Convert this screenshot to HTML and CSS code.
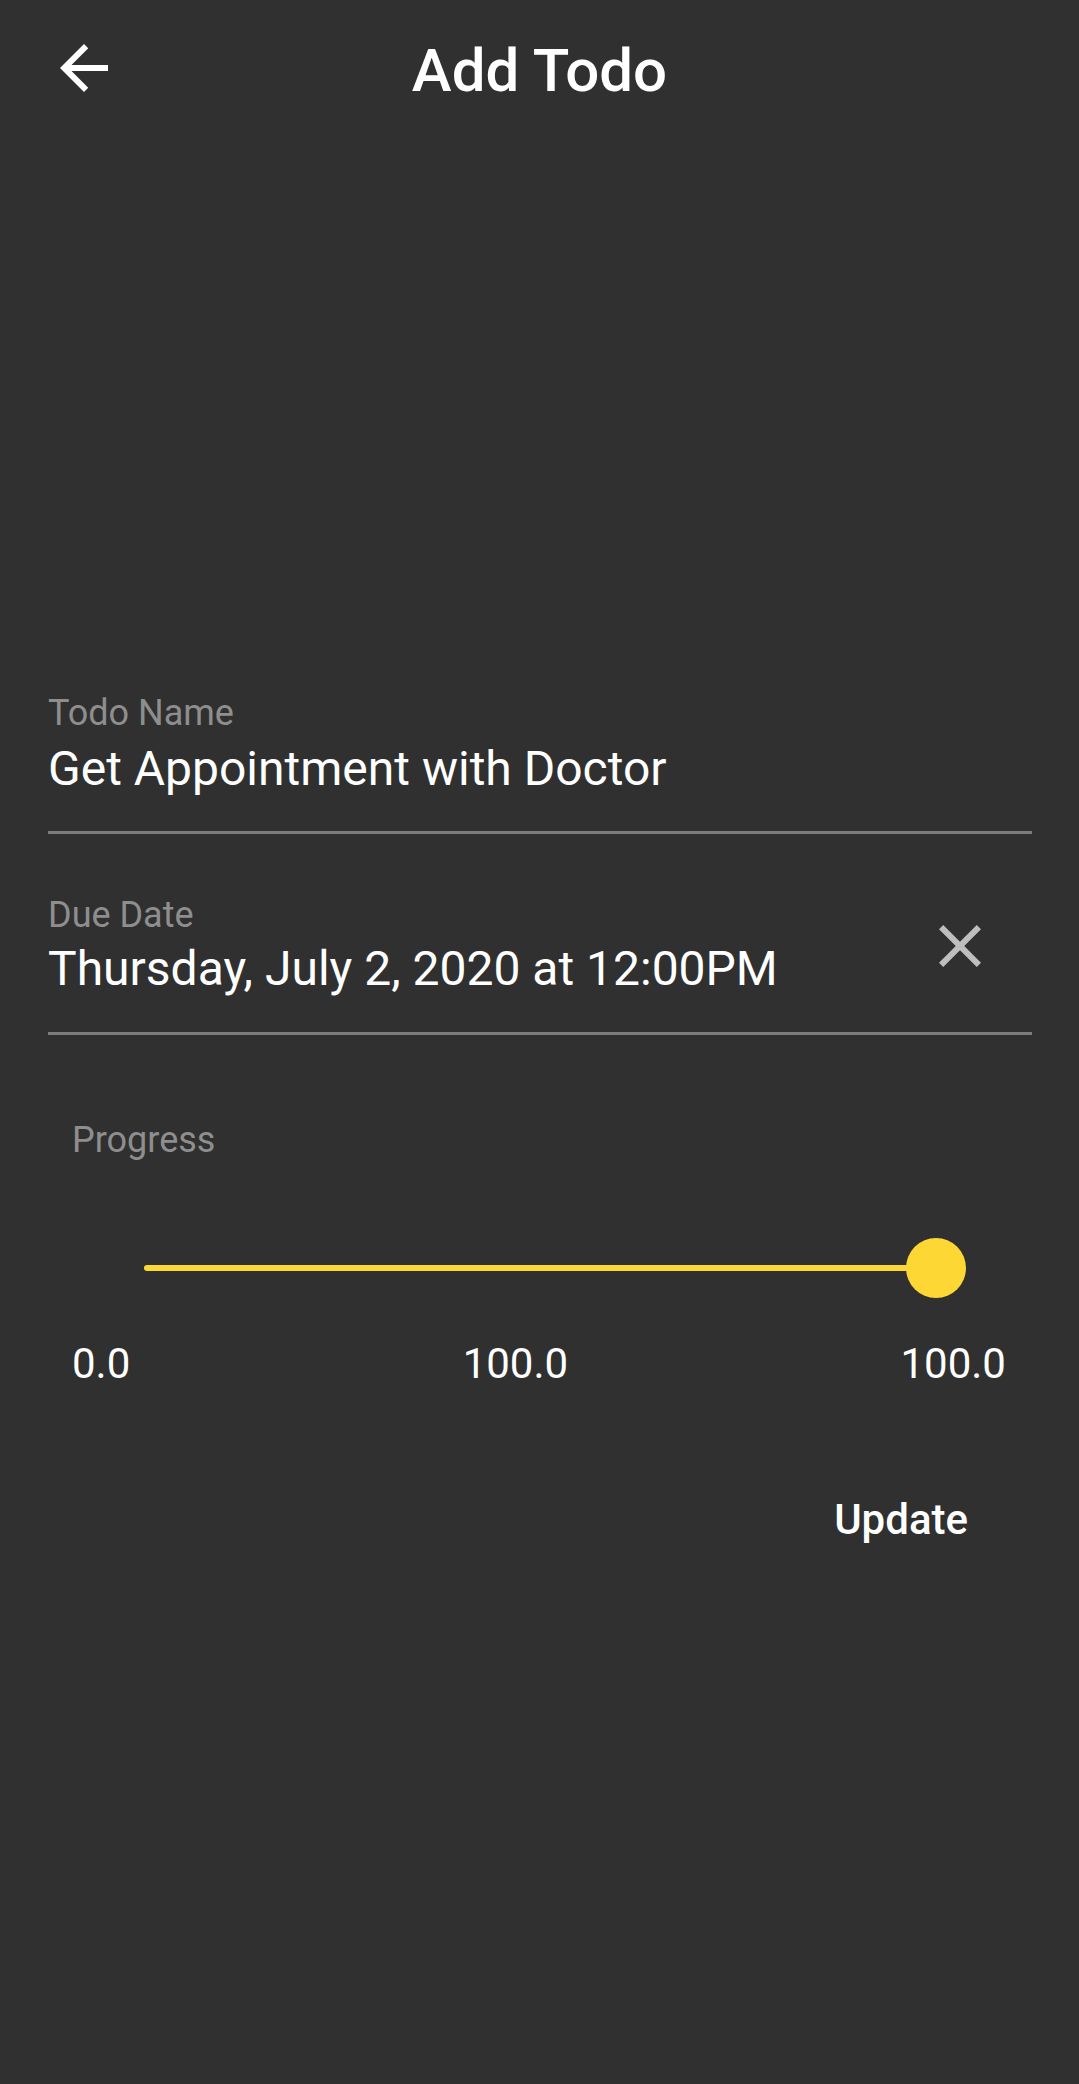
FILE: index.html
```html
<!DOCTYPE html>
<html>
<head>
<meta charset="utf-8">
<title>Add Todo</title>
<link rel="stylesheet" href="styles.css">
</head>
<body>
<div class="screen">
  <header class="appbar">
    <div class="back">
      <svg class="icon-back" viewBox="0 0 24 24" width="72" height="72"><path d="M20 11H7.83l5.59-5.59L12 4l-8 8 8 8 1.41-1.41L7.83 13H20v-2z" fill="#ffffff"/></svg>
    </div>
    <h1 class="title">Add Todo</h1>
    <div></div>
  </header>

  <main class="form">
    <div class="field field-name">
      <div class="label">Todo Name</div>
      <div class="value">Get Appointment with Doctor</div>
    </div>

    <div class="field field-date">
      <div class="date-text">
        <div class="label">Due Date</div>
        <div class="value value-date">Thursday, July 2, 2020 at 12:00PM</div>
      </div>
      <svg class="icon-clear" viewBox="0 0 24 24" width="72" height="72"><path d="M19 6.41L17.59 5 12 10.59 6.41 5 5 6.41 10.59 12 5 17.59 6.41 19 12 13.41 17.59 19 19 17.59 13.41 12z" fill="#bebebe"/></svg>
    </div>

    <div class="progress">
      <div class="progress-label">Progress</div>
      <div class="slider">
        <div class="track"></div>
        <div class="thumb"></div>
      </div>
      <div class="ticks">
        <span>0.0</span>
        <span>100.0</span>
        <span>100.0</span>
      </div>
    </div>

    <div class="actions">
      <span class="update">Update</span>
    </div>
  </main>
</div>
</body>
</html>
```

FILE: styles.css
```css
html, body {
  margin: 0;
  padding: 0;
  background: #303030;
}

.screen {
  width: 1079px;
  height: 2084px;
  background: #303030;
  font-family: Roboto, "Liberation Sans", sans-serif;
  color: #ffffff;
  overflow: hidden;
}

.appbar {
  display: grid;
  grid-template-columns: 1fr auto 1fr;
  align-items: start;
  padding: 32px 48px 0 48px;
  height: 136px;
  box-sizing: border-box;
}

.back {
  width: 72px;
  height: 72px;
}

.icon-back {
  display: block;
}

.title {
  margin: 9px 0 0 0;
  font-size: 60px;
  line-height: 60px;
  font-weight: 500;
  color: #ffffff;
}

.form {
  padding: 0 47px 0 48px;
}

.field {
  border-bottom: 3px solid #7c7c7c;
}

.label {
  font-size: 36px;
  line-height: 40px;
  color: #8e8e8e;
}

.value {
  font-size: 48px;
  line-height: 56px;
  color: #ffffff;
}

.field-name {
  margin-top: 557px;
  padding-bottom: 34px;
}

.field-name .value {
  margin-top: 8px;
}

.field-date {
  margin-top: 61px;
  padding-bottom: 35px;
  display: flex;
  align-items: flex-start;
}

.date-text {
  flex: 1;
}

.value-date {
  margin-top: 6px;
}

.icon-clear {
  display: block;
  flex: none;
  margin-top: 15px;
  margin-right: 36px;
}

.progress {
  padding: 0 26px 0 24px;
}

.progress-label {
  margin-top: 85px;
  font-size: 36px;
  line-height: 40px;
  color: #8e8e8e;
}

.slider {
  margin-top: 78px;
  margin-left: 72px;
  height: 60px;
  display: flex;
  align-items: center;
}

.track {
  width: 792px;
  height: 6px;
  border-radius: 3px;
  background: #fdd835;
  flex: none;
}

.thumb {
  width: 60px;
  height: 60px;
  border-radius: 50%;
  background: #fdd835;
  margin-left: -30px;
  flex: none;
}

.ticks {
  margin-top: 42px;
  display: flex;
  justify-content: space-between;
  font-size: 42px;
  line-height: 48px;
  color: #ffffff;
}

.actions {
  margin-top: 108px;
  display: flex;
  justify-content: flex-end;
  padding-right: 64px;
}

.update {
  font-size: 42px;
  line-height: 48px;
  font-weight: 500;
  color: #ffffff;
}
```
